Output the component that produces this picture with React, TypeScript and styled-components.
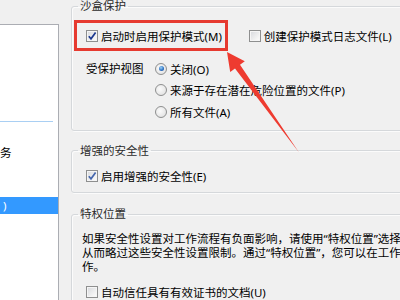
import React from "react";
import styled, { createGlobalStyle } from "styled-components";

const Global = createGlobalStyle`
  html, body { margin: 0; padding: 0; background: #f0f0f0; }
  body {
    font-family: "Noto Sans", "Noto Sans CJK SC", sans-serif;
    font-size: 11.5px;
    color: #000;
    overflow: hidden;
  }
`;

const Screen = styled.div`
  position: relative;
  width: 400px;
  height: 300px;
  overflow: hidden;
  display: flex;
  background: #f0f0f0;
`;

const LeftPane = styled.div`
  width: 59px;
  flex: none;
  padding-top: 24px;
  box-sizing: border-box;
  display: flex;
  flex-direction: column;
`;

const ListBox = styled.div`
  flex: 1;
  background: #fff;
  border-top: 1px solid #abadb3;
  border-right: 1px solid #abadb3;
  display: flex;
  flex-direction: column;
`;

const HoverLine = styled.div`
  margin-top: 96px;
  width: 53px;
  height: 1px;
  background: #a9cff3;
`;

const ListItem = styled.div<{ $selected?: boolean; $gap: number; $indent: number }>`
  margin-top: ${(p) => p.$gap}px;
  height: 17px;
  line-height: 17px;
  padding-left: ${(p) => p.$indent}px;
  white-space: nowrap;
  background: ${(p) => (p.$selected ? "#3399ff" : "transparent")};
  color: ${(p) => (p.$selected ? "#fff" : "#000")};
`;

const RightPane = styled.div`
  margin-left: 12px;
  width: 360px;
  flex: none;
  display: flex;
  flex-direction: column;
`;

const Group = styled.fieldset<{ $top: number }>`
  margin: ${(p) => p.$top}px 0 0 0;
  padding: 0;
  border: 1px solid #d5d8db;
  border-radius: 3px;
  box-shadow: inset 1px 1px 0 #fbfbfb, 1px 1px 0 #fbfbfb;
  min-width: 0;
`;

const Legend = styled.legend`
  margin-left: 6px;
  padding: 0 2px;
  height: 16px;
  line-height: 16px;
  color: #2b2b2b;
  white-space: nowrap;
`;

const GroupBody = styled.div<{ $pt: number; $pb: number; $pl: number }>`
  padding: ${(p) => p.$pt}px 0 ${(p) => p.$pb}px ${(p) => p.$pl}px;
  display: flex;
  flex-direction: column;
`;

const Row = styled.div`
  display: flex;
  align-items: center;
  white-space: nowrap;
`;

const RedBox = styled.div`
  display: flex;
  align-items: center;
  height: 25px;
  border: 3px solid #e63a30;
  padding: 0 3px 0 9px;
`;

const CheckLabel = styled.label<{ $ml?: number }>`
  display: flex;
  align-items: center;
  gap: 3px;
  height: 17px;
  margin-left: ${(p) => p.$ml ?? 0}px;
  white-space: nowrap;
`;

const Box = styled.span`
  width: 10px;
  height: 10px;
  flex: none;
  border: 1px solid #8e8f8f;
  background: linear-gradient(135deg, #d6d8dc 0%, #f3f3f3 70%, #fdfdfd 100%);
  box-shadow: inset 0 0 0 1px #f5f5f5;
  display: flex;
  align-items: center;
  justify-content: center;
`;

const Check = ({ color }: { color: string }) => (
  <svg width="10" height="10" viewBox="0 0 10 10">
    <path d="M1.8 5.2 L4 7.8 L8.6 1.6" fill="none" stroke={color} strokeWidth="1.7" />
  </svg>
);

const CheckBox = ({ checked, color = "#1c3990" }: { checked?: boolean; color?: string }) => (
  <Box>{checked && <Check color={color} />}</Box>
);

const ViewRow = styled.div`
  display: flex;
  margin-top: 7px;
  padding-left: 12px;
`;

const ViewLabel = styled.div`
  width: 69px;
  height: 21.5px;
  line-height: 21.5px;
  white-space: nowrap;
`;

const RadioList = styled.div`
  display: flex;
  flex-direction: column;
`;

const RadioRow = styled.label`
  display: flex;
  align-items: center;
  gap: 3px;
  height: 21.5px;
  white-space: nowrap;
`;

const Radio = styled.span<{ $on?: boolean }>`
  width: 10px;
  height: 10px;
  flex: none;
  border-radius: 50%;
  border: 1px solid #8e8f8f;
  background: radial-gradient(circle at 40% 40%, #fbfbfb 0%, #dcdcdc 100%);
  display: flex;
  align-items: center;
  justify-content: center;
  &::after {
    content: "";
    display: ${(p) => (p.$on ? "block" : "none")};
    width: 5px;
    height: 5px;
    border-radius: 50%;
    background: radial-gradient(circle at 40% 35%, #9fd4f8 0%, #2a6fc1 60%, #163f82 100%);
  }
`;

const Para = styled.div`
  line-height: 14px;
  white-space: nowrap;
  color: #000;
`;

const TrustRow = styled.div`
  margin-top: 10px;
  padding-left: 4px;
  display: flex;
`;

const Arrow = styled.svg`
  position: absolute;
  left: 0;
  top: 0;
  pointer-events: none;
`;

export default function App() {
  return (
    <>
      <Global />
      <Screen>
        <LeftPane>
          <ListBox>
            <HoverLine />
            <ListItem $gap={22} $indent={0}>务</ListItem>
            <ListItem $gap={36} $indent={3} $selected>)</ListItem>
          </ListBox>
        </LeftPane>
        <RightPane>
          <Group $top={-2}>
            <Legend>沙盒保护</Legend>
            <GroupBody $pt={6} $pb={7} $pl={2}>
              <Row>
                <RedBox>
                  <CheckLabel>
                    <CheckBox checked />
                    启动时启用保护模式(M)
                  </CheckLabel>
                </RedBox>
                <CheckLabel $ml={21}>
                  <CheckBox />
                  创建保护模式日志文件(L)
                </CheckLabel>
              </Row>
              <ViewRow>
                <ViewLabel>受保护视图</ViewLabel>
                <RadioList>
                  <RadioRow>
                    <Radio $on />
                    关闭(O)
                  </RadioRow>
                  <RadioRow>
                    <Radio />
                    来源于存在潜在危险位置的文件(P)
                  </RadioRow>
                  <RadioRow>
                    <Radio />
                    所有文件(A)
                  </RadioRow>
                </RadioList>
              </ViewRow>
            </GroupBody>
          </Group>
          <Group $top={12}>
            <Legend>增强的安全性</Legend>
            <GroupBody $pt={8.5} $pb={8} $pl={14}>
              <CheckLabel>
                <CheckBox checked color="#4566ad" />
                启用增强的安全性(E)
              </CheckLabel>
            </GroupBody>
          </Group>
          <Group $top={13}>
            <Legend>特权位置</Legend>
            <GroupBody $pt={9.5} $pb={8} $pl={10}>
              <Para>
                如果安全性设置对工作流程有负面影响，请使用“特权位置”选择性地信任文件、文件夹和主机，
                <br />
                从而略过这些安全性设置限制。通过“特权位置”，您可以在工作流程中信任部分内容，使其正常工
                <br />
                作。
              </Para>
              <TrustRow>
                <CheckLabel>
                  <CheckBox />
                  自动信任具有有效证书的文档(U)
                </CheckLabel>
              </TrustRow>
            </GroupBody>
          </Group>
        </RightPane>
        <Arrow width="400" height="300" viewBox="0 0 400 300">
          <polygon
            points="227,52 244.8,61.3 240,64.8 299,152.5 235,68.4 230.2,71.9"
            fill="#ee3b30"
          />
        </Arrow>
      </Screen>
    </>
  );
}
